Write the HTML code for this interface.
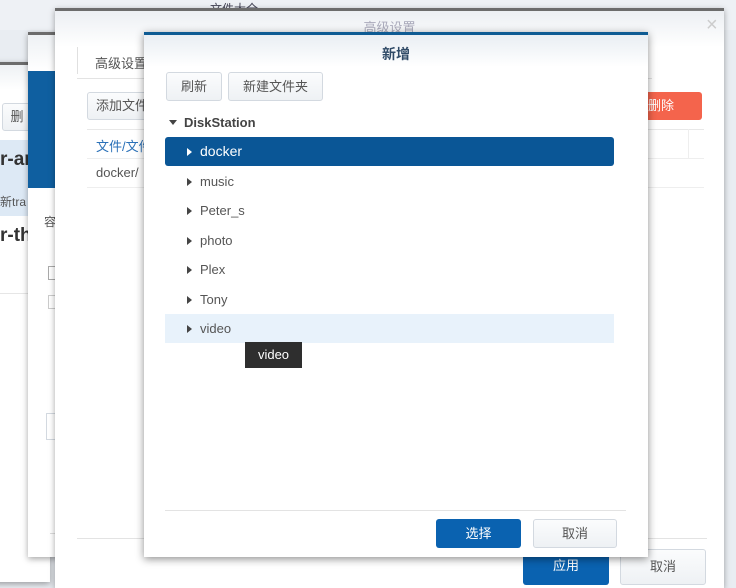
<!DOCTYPE html>
<html><head><meta charset="utf-8"><style>
*{margin:0;padding:0;box-sizing:border-box}
body{width:736px;height:582px;overflow:hidden;position:relative;background:#e9edf2;font-family:"Liberation Sans","Noto Sans CJK SC",sans-serif;font-size:13px;color:#555}
.a{position:absolute;white-space:nowrap}
.btn{position:absolute;border:1px solid #d3d9e0;border-radius:3px;background:linear-gradient(#fbfcfd,#eef1f4);color:#555;text-align:center;font-size:13px;white-space:nowrap}
.win{position:absolute;background:#fff;box-shadow:0 2px 6px rgba(0,0,0,.35)}
.row{position:absolute;left:21px;width:449px;height:29px;line-height:29px;padding-left:22px;font-size:13px;color:#555}
.tri{position:absolute;left:22px;top:11px;width:0;height:0;border-left:5px solid #444;border-top:4px solid transparent;border-bottom:4px solid transparent}
</style></head><body>
<div class="a" style="left:0;top:0;width:736px;height:30px;background:#eef1f5"></div>
<div class="a" style="left:210px;top:0;font-size:12px;color:#445">文件大全</div>

<!-- window 1 -->
<div class="win" style="left:-10px;top:62px;width:60px;height:520px;border-top:3px solid #6c6c6c;background:#fff">
<div class="a" style="left:10px;top:0;width:50px;height:25px;background:linear-gradient(#eef1f4,#fff)"></div>
<div class="btn" style="left:12px;top:38px;width:30px;height:28px;line-height:26px">删</div>
<div class="a" style="left:10px;top:75px;width:50px;height:76px;background:#dde9f5"></div>
<div class="a" style="left:10px;top:84px;font-size:19px;font-weight:bold;color:#333">r-ar</div>
<div class="a" style="left:10px;top:128px;font-size:12px">新tra</div>
<div class="a" style="left:10px;top:160px;font-size:19px;font-weight:bold;color:#333">r-th</div>
<div class="a" style="left:10px;top:228px;width:50px;height:1px;background:#e6e6e6"></div>
</div>

<!-- window 2 -->
<div class="win" style="left:28px;top:32px;width:60px;height:525px;border-top:3px solid #6c6c6c">
<div class="a" style="left:0;top:0;width:60px;height:36px;background:linear-gradient(#eef1f4,#fff)"></div>
<div class="a" style="left:0;top:36px;width:27px;height:117px;background:#0f5fa0"></div>
<div class="a" style="left:16px;top:178px;font-size:12px">容</div>
<div class="a" style="left:20px;top:231px;width:8px;height:14px;border:1px solid #aaa"></div>
<div class="a" style="left:20px;top:260px;width:8px;height:14px;border:1px solid #ccc"></div>
<div class="a" style="left:18px;top:378px;width:10px;height:27px;border:1px solid #d3d9e0;border-right:none"></div>
<div class="a" style="left:22px;top:498px;width:38px;height:1px;background:#ddd"></div>
</div>

<!-- window 3 -->
<div class="win" style="left:55px;top:8px;width:669px;height:580px;border-top:3px solid #6c6c6c">
<div class="a" style="left:0;top:0;width:669px;height:36px;background:linear-gradient(#eceff3,#fff)"></div>
<div class="a" style="left:0;top:6px;width:669px;text-align:center;font-size:13px;color:#aab">高级设置</div>
<div class="a" style="left:651px;top:3px;font-size:20px;color:#ccc">×</div>
<div class="a" style="left:22px;top:36px;width:72px;height:27px;border-left:1px solid #e0e0e0;border-right:1px solid #e0e0e0;padding:6px 0 0 17px;font-size:13px">高级设置</div>
<div class="a" style="left:22px;top:67px;width:575px;height:1px;background:#e3e3e3"></div>
<div class="btn" style="left:32px;top:81px;width:70px;height:28px;line-height:26px">添加文件</div>
<div class="a" style="left:573px;top:81px;width:74px;height:28px;border-radius:3px;background:#f4644c;color:#fff;line-height:28px;padding-left:20px">删除</div>
<div class="a" style="left:32px;top:118px;width:617px;height:1px;background:#e8e8e8"></div>
<div class="a" style="left:41px;top:125px;color:#2b71b8">文件/文件</div>
<div class="a" style="left:32px;top:147px;width:617px;height:1px;background:#eee"></div>
<div class="a" style="left:633px;top:118px;width:1px;height:29px;background:#eee"></div>
<div class="a" style="left:41px;top:154px">docker/</div>
<div class="a" style="left:32px;top:176px;width:617px;height:1px;background:#eee"></div>
<div class="a" style="left:22px;top:527px;width:630px;height:1px;background:#e3e3e3"></div>
<div class="a" style="left:468px;top:538px;width:86px;height:36px;border-radius:3px;background:#0a62b0;color:#fff;text-align:center;line-height:34px">应用</div>
<div class="btn" style="left:565px;top:538px;width:86px;height:36px;line-height:34px">取消</div>
</div>

<!-- window 4 -->
<div class="win" style="left:144px;top:32px;width:504px;height:525px;border-top:3px solid #0e5b93;box-shadow:0 2px 8px rgba(0,0,0,.45)">
<div class="a" style="left:0;top:0;width:504px;height:32px;background:linear-gradient(#e9eef3,#fff)"></div>
<div class="a" style="left:0;top:9px;width:504px;text-align:center;font-size:14px;font-weight:bold;color:#2f4a66">新增</div>
<div class="btn" style="left:22px;top:37px;width:56px;height:29px;line-height:27px">刷新</div>
<div class="btn" style="left:84px;top:37px;width:95px;height:29px;line-height:27px">新建文件夹</div>
<div class="a" style="left:25px;top:85px;width:0;height:0;border-top:5px solid #444;border-left:4px solid transparent;border-right:4px solid transparent"></div>
<div class="a" style="left:40px;top:80px;font-size:13px;font-weight:bold;color:#444">DiskStation</div>
<div class="row" style="top:102px;background:#0a5696;color:#fff;border-radius:3px;font-size:14px"><div class="tri" style="border-left-color:#fff"></div><span style="padding-left:13px">docker</span></div>
<div class="row" style="top:132px"><div class="tri"></div><span style="padding-left:13px">music</span></div>
<div class="row" style="top:161px"><div class="tri"></div><span style="padding-left:13px">Peter_s</span></div>
<div class="row" style="top:191px"><div class="tri"></div><span style="padding-left:13px">photo</span></div>
<div class="row" style="top:220px"><div class="tri"></div><span style="padding-left:13px">Plex</span></div>
<div class="row" style="top:250px"><div class="tri"></div><span style="padding-left:13px">Tony</span></div>
<div class="row" style="top:279px;background:#e8f2fb"><div class="tri"></div><span style="padding-left:13px">video</span></div>
<div class="a" style="left:101px;top:307px;width:57px;height:26px;background:#2e2e2e;color:#fff;text-align:center;line-height:26px;font-size:13px">video</div>
<div class="a" style="left:21px;top:475px;width:461px;height:1px;background:#e3e3e3"></div>
<div class="a" style="left:292px;top:484px;width:85px;height:29px;border-radius:3px;background:#0a62b0;color:#fff;text-align:center;line-height:29px">选择</div>
<div class="btn" style="left:389px;top:484px;width:84px;height:29px;line-height:27px">取消</div>
</div>
</body></html>
